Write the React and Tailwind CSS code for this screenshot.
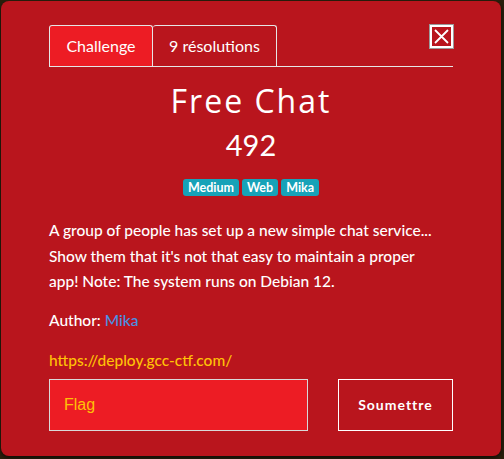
import { useState } from 'react';

const Badge = ({ children }) => (
  <span className="rounded-[3px] bg-[#17a2b8] px-[5px] py-[1px] text-[12.5px] font-bold leading-[15px] text-white">{children}</span>
);

const App = () => {
  const [tab, setTab] = useState('challenge');
  const [flag, setFlag] = useState('');

  return (
    <div className="h-[459px] w-[504px] bg-[#2a1f0c] p-px font-['Lato','Open_Sans',sans-serif]">
      <div className="flex h-[455px] w-[500px] flex-col rounded-lg bg-[#b9151d] px-12 pt-6 text-white shadow-[0_2px_4px_rgba(0,0,0,0.6)]">
        {/*header*/}
        <div className="flex items-start justify-between">
          <div className="flex flex-1 border-b border-[#e6e6e6]">
            <button
              className={`h-[41px] w-[104px] rounded-t-[3px] border border-b-0 border-[#e6e6e6] text-[16px] ${tab === 'challenge' ? 'bg-[#ed1c24]' : ''}`}
              onClick={() => setTab('challenge')}
            >
              Challenge
            </button>
            <button
              className={`h-[41px] w-[124px] rounded-t-[3px] border border-b-0 border-l-0 border-[#e6e6e6] text-[16px] ${tab === 'solves' ? 'bg-[#ed1c24]' : ''}`}
              onClick={() => setTab('solves')}
            >
              9 résolutions
            </button>
            <div className="flex-1"></div>
            <button className="mb-[18px] flex h-[23px] w-[23px] items-center justify-center border-2 border-white outline outline-1 outline-[#9a9a9a]">
              <svg width="17" height="17" viewBox="0 0 17 17" stroke="white" strokeWidth="1.8">
                <path d="M2 2 L15 15 M15 2 L2 15" />
              </svg>
            </button>
          </div>
        </div>

        {/*body*/}
        <h2 className="mt-[14px] text-center font-['Open_Sans',sans-serif] text-[32px] leading-[40px] tracking-[2px]">Free Chat</h2>
        <div className="mt-[7px] text-center text-[29px] leading-[34px]">492</div>
        <div className="mt-[17px] flex justify-center gap-[3px]">
          <Badge>Medium</Badge>
          <Badge>Web</Badge>
          <Badge>Mika</Badge>
        </div>
        <p className="mt-[22px] pr-[8px] text-[15.5px] font-medium leading-[25.5px]">
          A group of people has set up a new simple chat service... Show them that it's not that easy to maintain a proper app! Note: The system runs on Debian 12.
        </p>
        <p className="mt-[13px] text-[15.5px] font-medium leading-[25px]">
          Author: <a className="text-[#4a90e2]">Mika</a>
        </p>
        <p className="mt-[15px] text-[15.5px] font-medium leading-[25px] text-[#ffc107]">https://deploy.gcc-ctf.com/</p>

        {/*footer*/}
        <form className="mt-[6px] flex justify-between" onSubmit={(e) => e.preventDefault()}>
          <input
            value={flag}
            onChange={(e) => setFlag(e.target.value)}
            placeholder="Flag"
            className="h-[52px] w-[259px] border border-[#d9d9d9] bg-[#ed1c24] px-[14px] font-['Liberation_Sans',sans-serif] text-[16px] text-[#ffc107] placeholder-[#ffc107] outline-none"
          />
          <button type="submit" className="h-[52px] w-[115px] border border-white text-[14px] font-bold tracking-[1px]">
            Soumettre
          </button>
        </form>
      </div>
    </div>
  );
};

export default App;
